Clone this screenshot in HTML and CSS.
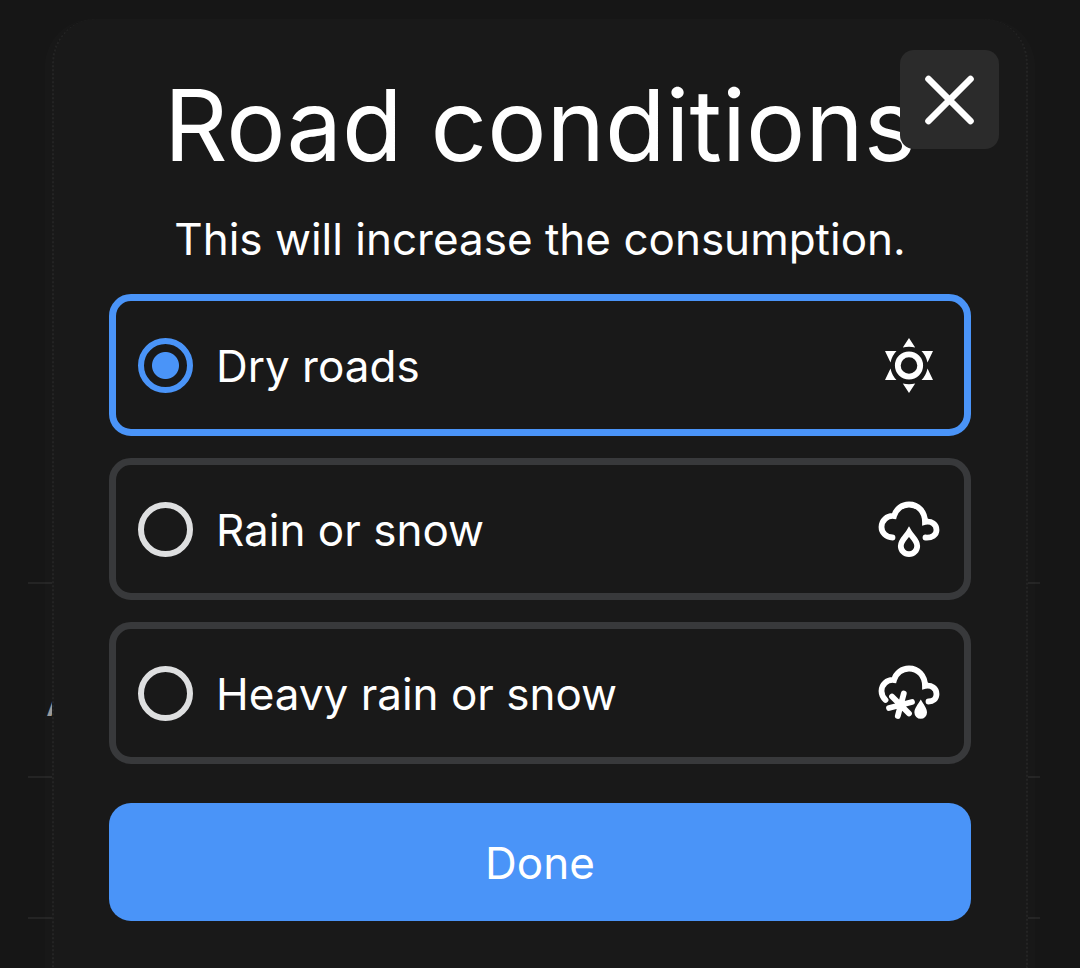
FILE: index.html
```html
<!DOCTYPE html>
<html lang="en">
<head>
  <meta charset="UTF-8">
  <meta name="viewport" content="width=device-width, initial-scale=1.0">
  <title>Road conditions</title>
  <link rel="stylesheet" href="styles.css">
</head>
<body>
  <div class="backdrop" aria-hidden="true">
    <span class="handle"></span>
    <div class="row row-label">A</div>
    <div class="row row-short"></div>
    <div class="row row-last"></div>
  </div>

  <div class="modal" role="dialog" aria-labelledby="title">
    <form class="modal-body">
      <button type="button" class="close" aria-label="Close">
        <svg viewBox="0 0 50 50" width="50" height="50" fill="none" stroke="#fff" stroke-width="6.6" stroke-linecap="round">
          <path d="M3.500 4 45.500 46M45.500 4 3.500 46"/>
        </svg>
      </button>
      <h1 id="title">Road conditions</h1>
      <p>This will increase the consumption.</p>

      <div class="options">
        <label class="option">
          <input type="radio" name="road" value="dry" checked>
          <span>Dry roads</span>
          <svg class="icon" viewBox="0 0 62 60" fill="#fff">
            <circle cx="31" cy="30.500" r="11.2" fill="none" stroke="#fff" stroke-width="5.8"/>
            <path d="M31 3 37.200 12.500Q31 11 24.800 12.500ZM31 58 37.200 48.500Q31 50 24.800 48.500ZM7 16 18.500 16Q14 20.500 12.500 27.500ZM55 16 43.500 16Q48 20.500 49.500 27.500ZM7 45 18.500 45Q14 40.500 12.500 33.500ZM55 45 43.500 45Q48 40.500 49.500 33.500Z"/>
          </svg>
        </label>
        <label class="option">
          <input type="radio" name="road" value="rain">
          <span>Rain or snow</span>
          <svg class="icon" viewBox="0 0 62 60" fill="none" stroke="#fff" stroke-width="5.800" stroke-linecap="round">
            <path d="M14.500 38.500C8 38.500 3.500 33.500 3.500 28C3.500 21.500 9 16.300 16 17C18 10 24 5.500 31 5.500C40 5.500 47 12.500 47 23C53.500 21.500 58.500 25.500 58.500 31C58.500 36 54 39 47.500 38.500"/>
            <path d="M31 33C28 38 22.800 41.500 22.800 47A8.200 8.200 0 0 0 39.200 47C39.200 41.500 34 38 31 33Z"/>
          </svg>
        </label>
        <label class="option">
          <input type="radio" name="road" value="heavy">
          <span>Heavy rain or snow</span>
          <svg class="icon" viewBox="0 0 62 60" fill="none" stroke="#fff" stroke-width="5.800" stroke-linecap="round">
            <path d="M7.500 37C4.500 34 3.500 31.500 3.500 28C3.500 21.500 9 16.300 16 17C18 10 24 5.500 31 5.500C40 5.500 47 12.500 47 23C53.500 21.500 58.500 25.500 58.500 31C58.500 36 55 38.500 50.500 38.500"/>
            <path stroke-width="5.800" d="M25.800 30.500 19.800 53M14 33.500 31 50.500M11 45 34 39"/>
            <path fill="#fff" stroke="none" d="M42.800 36.500C45.500 41.500 49 45 49 49.500A6.300 6.300 0 0 1 36.400 49.500C36.400 45 40 41.500 42.800 36.500Z"/>
          </svg>
        </label>
      </div>

      <button type="submit" class="done">Done</button>
    </form>
  </div>
</body>
</html>
```
FILE: styles.css
```css
* {
  box-sizing: border-box;
}
body {
  position: relative;
  display: flow-root;
  margin: 0;
  min-height: 100vh;
  background: #161616;
  color: #fff;
  font-family: Inter, sans-serif;
  font-size: 44px;
}

/* page behind the dialog */
.backdrop {
  position: absolute;
  inset: 0 40px 0 28px;
  padding-top: 582px;
  overflow: hidden;
}
.handle {
  position: absolute;
  top: 19px;
  right: 178px;
  width: 24px;
  height: 4px;
  border-radius: 50% 50% 0 0;
  background: #292929;
}
.row {
  height: 194px;
  border-top: 2px solid #242424;
}
.row-label {
  padding: 87px 18px 0;
  line-height: 58px;
  color: #999;
}
.row-short {
  height: 141px;
}
.row-last {
  height: 40px;
}

.modal {
  position: relative;
  margin: 19px 45px 0;
  border: solid rgba(255, 255, 255, 0.012);
  border-width: 0 7px;
  border-radius: 48px 48px 0 0;
  background: #191919;
  background-clip: padding-box;
}
.modal-body {
  display: flex;
  flex-direction: column;
  min-height: calc(100vh - 19px);
  padding: 48px 55px 0;
  border: dotted #242424;
  border-width: 0 2px;
  border-radius: 44px 44px 0 0;
}
.close {
  position: absolute;
  top: 31px;
  right: 29px;
  display: flex;
  align-items: center;
  justify-content: center;
  width: 99px;
  height: 99px;
  padding: 0;
  border: none;
  border-radius: 14px;
  background: #2b2b2b;
}
h1 {
  margin: 0;
  font-size: 99px;
  font-weight: 400;
  line-height: 116px;
  text-align: center;
}
p {
  margin: 28px 0 27px;
  line-height: 56px;
  text-align: center;
}
.options {
  display: flex;
  flex-direction: column;
  gap: 22px;
}
.option {
  display: flex;
  align-items: center;
  gap: 23px;
  height: 142px;
  padding: 0 24px 0 22px;
  border: 7px solid #38393b;
  border-radius: 22px;
}
.option:has(input:checked) {
  border-color: #4a94f8;
}
.option span {
  flex: 1;
  padding-top: 2px;
}
.option input {
  appearance: none;
  width: 55px;
  height: 55px;
  margin: 0;
  border: 6px solid #dedfe0;
  border-radius: 50%;
}
.option input:checked {
  border-color: #4a94f8;
  background: radial-gradient(circle, #4a94f8 13px, transparent 14px);
}
.icon {
  width: 62px;
  height: 60px;
}
.done {
  height: 118px;
  margin-top: 39px;
  padding: 2px 0 0;
  border: none;
  border-radius: 22px;
  background: #4a94f8;
  color: #fff;
  font: inherit;
}
```
